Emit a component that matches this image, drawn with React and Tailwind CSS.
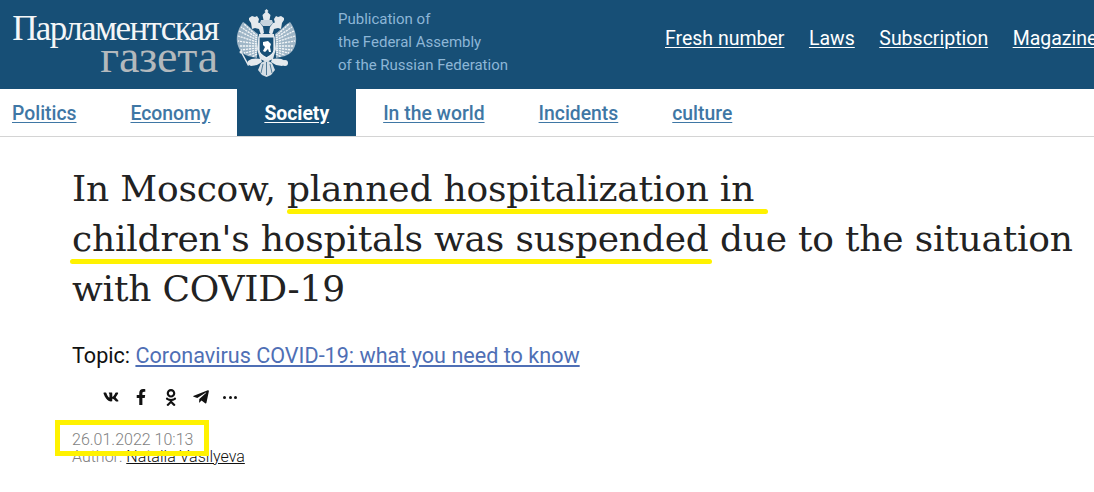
import { FaVk, FaFacebookF, FaOdnoklassniki, FaTelegramPlane } from 'react-icons/fa'

const TOP_LINKS = ['Fresh number', 'Laws', 'Subscription', 'Magazine']
const SECTIONS = ['Politics', 'Economy', 'Society', 'In the world', 'Incidents', 'culture']

// wing feathers, drawn from the shoulder outwards
const FEATHERS = [
  'M21 27L8 15', 'M21 29L5 18', 'M21 31L3 22', 'M21 33L2 27', 'M21 35L2 32',
  'M21 37L3 37', 'M21 39L5 41', 'M21 41L8 44', 'M21 43L12 46', 'M21 45L16 48',
]

function EagleSide() {
  return (
    <>
      {/* crown */}
      <path d="M13 9l3-2 3 1 2-1 2 3-1 4h-7l-2-3z" />
      {/* head and neck */}
      <path d="M15 14l5-1 4 1 3 4 1 6-3 2-2-6-4-1-3 1z" />
      {/* wing */}
      <path d="M22 25C15 20 11 15 7 13 3 18 0 26 1 33c1 7 5 12 11 14l9 2z" fill="#9fb6c7" />
      <g stroke="#f4f7f9" strokeWidth="1.3" strokeDasharray="2.2 0.8" fill="none">
        {FEATHERS.map((d) => (
          <path key={d} d={d} />
        ))}
      </g>
      {/* leg and claw */}
      <path d="M25 50c-4-1-10-1-13 2-1 2 0 4 3 5l6-1 5-3z" />
    </>
  )
}

function Eagle() {
  return (
    <svg width="62" height="68" viewBox="0 0 62 68" className="shrink-0" fill="#e4e9ed">
      <EagleSide />
      <g transform="matrix(-1 0 0 1 61 0)">
        <EagleSide />
      </g>
      {/* big crown */}
      <path d="M30.500 0l2 2-1 1 3 3-1 5h-6l-1-5 3-3-1-1z" />
      <path d="M25 11h11l1 3-3 3h-7l-3-3z" fill="#c6d3dd" />
      {/* body and shield */}
      <path d="M23 25h15l2 15-3 10-6.500 3-6.500-3-3-10z" fill="#dfe6eb" />
      <path d="M23 28h15v13c0 4-4 6-7.500 8-3.500-2-7.500-4-7.500-8z" fill="#174f76" stroke="#eef2f5" strokeWidth="1.200" />
      <path d="M27 33l5-1 3 3-1 3 1 5h-2l-1-3-3 3-2-1 2-4-2-2z" fill="#fff" />
      {/* tail */}
      <path d="M25 54l5.500-3 5.500 3 3 7-4 5-4.500 2-4.500-2-4-5z" fill="#d5dee5" />
      <g stroke="#174f76" strokeWidth="0.700" fill="none">
        <path d="M30.500 53v13M27 55l-2 9M34 55l2 9" />
      </g>
      {/* sceptre and orb */}
      <path d="M12 57L5 44l1.200-.6L13.200 56z" />
      <circle cx="5" cy="43" r="1.500" />
      <circle cx="49" cy="54" r="3" />
    </svg>
  )
}

export default function App() {
  return (
    <div className="relative h-[492px] w-[1094px] overflow-hidden bg-white font-['Roboto',sans-serif]">
      <header className="flex h-[89px] items-start overflow-hidden bg-[#174f76]">
        <div className="ml-[11px] flex w-[207px] shrink-0 flex-col items-end pt-[12px] font-['Liberation_Serif',serif]">
          <span className="text-[35px] leading-[34px] tracking-[-1.6px] text-[#f4f6f7] whitespace-nowrap">Парламентская</span>
          <span className="mt-[-8px] text-[46px] leading-[38px] tracking-[-0.2px] text-[#b3b9bd]">газета</span>
        </div>
        <div className="ml-[18px] mt-[9px]">
          <Eagle />
        </div>
        <div className="ml-[40px] mt-[8px] shrink-0 text-[15px] leading-[23px] text-[#8db6d6]">
          <div>Publication of</div>
          <div>the Federal Assembly</div>
          <div>of the Russian Federation</div>
        </div>
        <nav className="ml-[157px] mt-[27px] flex shrink-0 gap-[24.500px] text-[19.500px] leading-[24px] whitespace-nowrap text-white">
          {TOP_LINKS.map((label) => (
            <a key={label} href="#" className="underline underline-offset-2">{label}</a>
          ))}
        </nav>
      </header>

      <nav className="flex h-[48px] border-b border-[#d4d4d4] pl-[12px] text-[19.350px] font-medium">
        {SECTIONS.map((label, i) => (
          <a
            key={label}
            href="#"
            className={`flex h-[47px] items-center pt-[2px] underline underline-offset-2 ${
              i === 0 ? 'pr-[27px]' : 'px-[27px]'
            } ${label === 'Society' ? 'bg-[#174f76] font-bold text-white' : 'text-[#3f77a5]'}`}
          >
            {label}
          </a>
        ))}
      </nav>

      <main className="pl-[72px]">
        <h1 className="mt-[27px] w-[1020px] font-['DejaVu_Serif',serif] text-[36px] leading-[50px] font-normal tracking-[-0.200px] whitespace-nowrap text-[#222]">
          In Moscow, planned hospitalization in
          <br />
          children's hospitals was suspended due to the situation
          <br />
          with COVID-19
        </h1>

        <p className="mt-[27px] text-[21.600px] leading-[30px] text-[#111]">
          Topic: <a href="#" className="text-[#4f6fb5] underline">Coronavirus COVID-19: what you need to know</a>
        </p>

        <div className="mt-[16px] ml-[31px] flex h-[20px] items-center gap-[14px] text-[17px] text-[#111]">
          <FaVk className="w-[16px] text-[18px]" />
          <FaFacebookF className="w-[16px] text-[16px]" />
          <FaOdnoklassniki className="w-[16px]" />
          <FaTelegramPlane className="w-[16px] text-[18px]" />
          <span className="flex w-[16px] gap-[2.500px]">
            <i className="size-[3px] shrink-0 rounded-full bg-[#111]" />
            <i className="size-[3px] shrink-0 rounded-full bg-[#111]" />
            <i className="size-[3px] shrink-0 rounded-full bg-[#111]" />
          </span>
        </div>

        <div className="mt-[25px] text-[16px] leading-[16px] font-light text-[#7f7f7f]">26.01.2022 10:13</div>
        <div className="text-[16px] leading-[17px] font-light text-[#7f7f7f]">
          Author: <a href="#" className="text-[#111] underline">Natalia Vasilyeva</a>
        </div>
      </main>

      {/* yellow marker drawn over the page */}
      <span className="absolute left-[287px] top-[209px] h-[5px] w-[481px] rounded-full bg-[#fff200]" />
      <span className="absolute left-[70px] top-[259px] h-[5px] w-[642px] rounded-full bg-[#fff200]" />
      <span className="absolute left-[55px] top-[420px] h-[36px] w-[154px] border-[5px] border-[#fff200]" />
    </div>
  )
}
